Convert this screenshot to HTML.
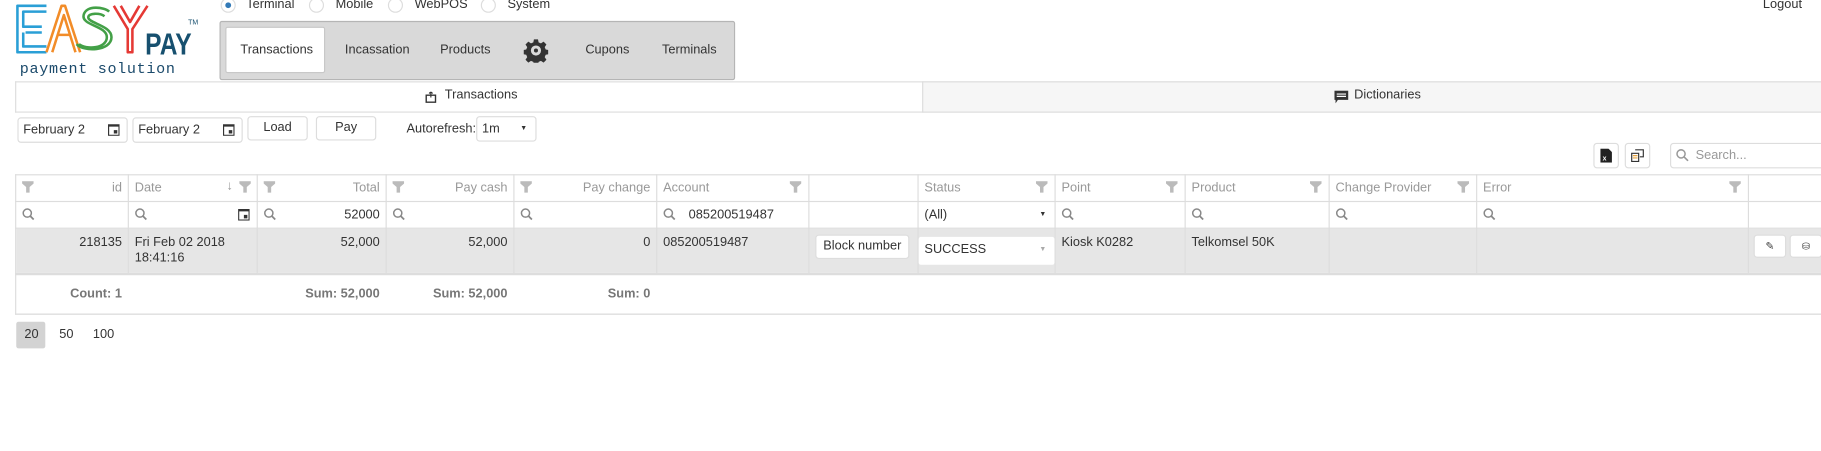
<!DOCTYPE html>
<html><head><meta charset="utf-8"><style>
*{box-sizing:border-box;margin:0;padding:0}
html,body{width:1821px;height:451px;overflow:hidden;background:#fff}
#w{position:absolute;left:0;top:0;width:1568px;height:388px;transform:scale(1.16135);transform-origin:0 0;font-family:"Liberation Sans",sans-serif;font-size:11px;color:#333}
.a{position:absolute;white-space:nowrap}
.rad{position:absolute;width:13px;height:13px;border:1px solid #ddd;border-radius:50%;top:-2px;background:#fff}
.rad.on::after{content:"";position:absolute;left:3px;top:3px;width:5px;height:5px;border-radius:50%;background:#337ab7}
.btn{position:absolute;border:1px solid #ddd;border-radius:3px;background:#fff;text-align:center;line-height:19px}
.inp{position:absolute;border:1px solid #ddd;border-radius:3px;background:#fff;height:22px;line-height:20px;padding-left:4px}
.vl{position:absolute;width:1px;background:#ddd}
.hl{position:absolute;height:1px;background:#ddd}
.h{color:#999}
.b{font-weight:bold;color:#777}
svg{display:block}
</style></head><body><div id="w">
<!-- logo -->
<svg class="a" style="left:12px;top:0" width="172" height="66" viewBox="0 0 172 66">
<g fill="none" stroke-width="2.2" stroke-linejoin="round">
<path d="M28 5H3v40h25M28 10H8v13h16M8 28v12h20M24 28H10" stroke="#2a9fd6"/>
<path d="M28 45L41 5h3l13 40M33 45L43 13l10 32M37 30h12" stroke="#f28c28"/>
<path d="M82 10c-4-4-20-6-22 3-2 9 20 9 20 19 0 10-18 11-24 6M78 14c-4-3-14-3-14 1 0 5 20 7 20 17 0 12-24 13-30 6" stroke="#43a047"/>
<path d="M86 5l12 20V45h4V25L115 5M92 5l8 14 8-14" stroke="#e53935"/>
</g>
<text x="113" y="47" font-family="Liberation Sans" font-weight="bold" font-size="26" textLength="40" lengthAdjust="spacingAndGlyphs" fill="#17506f">PAY</text>
<text x="150" y="21" font-family="Liberation Sans" font-size="6" fill="#17506f">TM</text>
<text x="5" y="63" font-family="Liberation Mono" font-size="13" letter-spacing="0.6" fill="#1b4a6b">payment solution</text>
</svg>
<!-- radios -->
<div class="rad on" style="left:190px"></div><div class="a" style="left:212px;top:-2px">Terminal</div>
<div class="rad" style="left:266px"></div><div class="a" style="left:289px;top:-2px">Mobile</div>
<div class="rad" style="left:334px"></div><div class="a" style="left:357px;top:-2px">WebPOS</div>
<div class="rad" style="left:414px"></div><div class="a" style="left:437px;top:-2px">System</div>
<div class="a" style="left:1518px;top:-2px">Logout</div>
<!-- nav -->
<div class="a" style="left:189px;top:18px;width:444px;height:51px;background:#d9d9d9;border:1px solid #b5b5b5;border-radius:2px"></div>
<div class="a" style="left:194px;top:23px;width:86px;height:40px;background:#fff;border:1px solid #c8c8c8;border-radius:2px"></div>
<div class="a" style="left:207px;top:37px">Transactions</div>
<div class="a" style="left:297px;top:37px">Incassation</div>
<div class="a" style="left:379px;top:37px">Products</div>
<svg class="a" style="left:451px;top:33px" width="21" height="21" viewBox="0 0 24 24"><path fill="#333" d="M10 1h4l.6 3 2.3 1 2.6-1.7 2.8 2.8-1.7 2.6 1 2.3 3 .6v4l-3 .6-1 2.3 1.7 2.6-2.8 2.8-2.6-1.7-2.300 1-.6 3h-4l-.6-3-2.3-1-2.6 1.7-2.8-2.8 1.7-2.6-1-2.3-3-.6v-4l3-.6 1-2.3-1.7-2.6 2.8-2.8 2.6 1.7 2.3-1zM12 7a5 5 0 100 10 5 5 0 000-10zm0 3a2 2 0 110 4 2 2 0 010-4z" fill-rule="evenodd"/></svg>
<div class="a" style="left:504px;top:37px">Cupons</div>
<div class="a" style="left:570px;top:37px">Terminals</div>
<!-- tabs -->
<div class="a" style="left:13px;top:70px;width:1555px;height:27px;border-top:1px solid #ddd;border-bottom:1px solid #ddd;border-left:1px solid #ddd"></div>
<div class="a" style="left:794px;top:70px;width:774px;height:27px;background:#f6f6f6;border-top:1px solid #ddd;border-bottom:1px solid #ddd;border-left:1px solid #ddd"></div>
<svg class="a" style="left:366px;top:79px" width="10" height="10" viewBox="0 0 10 10"><path d="M1 3h8v6H1z" fill="none" stroke="#333" stroke-width="1.2"/><path d="M5 0v5M3.5 1.5L5 0l1.5 1.5" stroke="#333" fill="none"/></svg>
<div class="a" style="left:383px;top:76px">Transactions</div>
<svg class="a" style="left:1149px;top:78px" width="12" height="11" viewBox="0 0 12 11"><path d="M0 0h12v8H3l-2 3V8H0z" fill="#333"/><path d="M2 3h8M2 5h8" stroke="#fff"/></svg>
<div class="a" style="left:1166px;top:76px">Dictionaries</div>
<!-- toolbar -->
<div class="inp" style="left:15px;top:101px;width:95px">February 2</div>
<svg class="a" style="left:93px;top:106px" width="10" height="11" viewBox="0 0 10 11"><path d="M0 1h10v10H0z" fill="#333"/><path d="M1 3h8v7H1z" fill="#fff"/><path d="M5 6h3v3H5z" fill="#333"/></svg>
<div class="inp" style="left:114px;top:101px;width:95px">February 2</div>
<svg class="a" style="left:192px;top:106px" width="10" height="11" viewBox="0 0 10 11"><path d="M0 1h10v10H0z" fill="#333"/><path d="M1 3h8v7H1z" fill="#fff"/><path d="M5 6h3v3H5z" fill="#333"/></svg>
<div class="btn" style="left:213px;top:100px;width:52px;height:21px">Load</div>
<div class="btn" style="left:272px;top:100px;width:52px;height:21px">Pay</div>
<div class="a" style="left:350px;top:105px">Autorefresh:</div>
<div class="inp" style="left:410px;top:100px;width:52px">1m</div>
<div class="a" style="left:448px;top:108px;font-size:6px">▼</div>
<!-- top-right tools -->
<div class="btn" style="left:1372px;top:123px;width:22px;height:22px"></div>
<svg class="a" style="left:1378px;top:128px" width="10" height="12" viewBox="0 0 10 12"><path d="M0 0h7l3 3v9H0z" fill="#222"/><text x="2" y="10" font-size="6" fill="#fff" font-family="Liberation Sans" font-weight="bold">x</text></svg>
<div class="btn" style="left:1399px;top:123px;width:22px;height:22px"></div>
<svg class="a" style="left:1404px;top:128px" width="12" height="12" viewBox="0 0 12 12"><path d="M4 1h7v6H8" fill="none" stroke="#333"/><path d="M1 4h6v7H1z" fill="#fff" stroke="#333"/><path d="M2 6h4M2 8h4" stroke="#e8a33c"/></svg>
<div class="inp" style="left:1438px;top:123px;width:140px;height:22px;padding-left:21px;color:#999">Search...</div>
<svg class="a" style="left:1443px;top:128px" width="11" height="11" viewBox="0 0 11 11"><circle cx="4.5" cy="4.5" r="3.5" fill="none" stroke="#999" stroke-width="1.3"/><path d="M7 7l3.5 3.5" stroke="#999" stroke-width="1.4"/></svg>
<!-- grid -->
<div class="a" style="left:13px;top:150px;width:1556px;height:121px;border:1px solid #ddd;border-right:none"></div>
<div class="a" style="left:14px;top:197px;width:1554px;height:38px;background:#e6e6e6"></div>
<div class="hl" style="left:13px;top:173px;width:1555px"></div>
<div class="hl" style="left:13px;top:196px;width:1555px"></div>
<div class="hl" style="left:13px;top:235px;width:1555px;height:2px"></div>
<div class="hl" style="left:13px;top:270px;width:1555px"></div>
<div class="vl" style="left:110px;top:150px;height:86px"></div>
<div class="vl" style="left:221px;top:150px;height:86px"></div>
<div class="vl" style="left:332px;top:150px;height:86px"></div>
<div class="vl" style="left:442px;top:150px;height:86px"></div>
<div class="vl" style="left:565px;top:150px;height:86px"></div>
<div class="vl" style="left:696px;top:150px;height:86px"></div>
<div class="vl" style="left:790px;top:150px;height:86px"></div>
<div class="vl" style="left:908px;top:150px;height:86px"></div>
<div class="vl" style="left:1020px;top:150px;height:86px"></div>
<div class="vl" style="left:1144px;top:150px;height:86px"></div>
<div class="vl" style="left:1271px;top:150px;height:86px"></div>
<div class="vl" style="left:1505px;top:150px;height:86px"></div>
<svg width="0" height="0" style="position:absolute"><defs><symbol id="f" viewBox="0 0 10 10"><path d="M0 0h10v2L6.5 5v5h-3V5L0 2z" fill="#bbb"/></symbol><symbol id="s" viewBox="0 0 11 11"><circle cx="4.5" cy="4.5" r="3.5" fill="none" stroke="#888" stroke-width="1.3"/><path d="M7 7l3 3" stroke="#888" stroke-width="1.5"/></symbol></defs></svg>
<svg class="a" style="left:19px;top:156px" width="10" height="10"><use href="#f"/></svg>
<svg class="a" style="left:206px;top:156px" width="10" height="10"><use href="#f"/></svg>
<svg class="a" style="left:227px;top:156px" width="10" height="10"><use href="#f"/></svg>
<svg class="a" style="left:338px;top:156px" width="10" height="10"><use href="#f"/></svg>
<svg class="a" style="left:448px;top:156px" width="10" height="10"><use href="#f"/></svg>
<svg class="a" style="left:680px;top:156px" width="10" height="10"><use href="#f"/></svg>
<svg class="a" style="left:892px;top:156px" width="10" height="10"><use href="#f"/></svg>
<svg class="a" style="left:1004px;top:156px" width="10" height="10"><use href="#f"/></svg>
<svg class="a" style="left:1128px;top:156px" width="10" height="10"><use href="#f"/></svg>
<svg class="a" style="left:1255px;top:156px" width="10" height="10"><use href="#f"/></svg>
<svg class="a" style="left:1489px;top:156px" width="10" height="10"><use href="#f"/></svg>
<div class="a h" style="right:1463px;top:156px">id</div>
<div class="a h" style="left:116px;top:156px">Date</div>
<div class="a h" style="left:195px;top:154px">↓</div>
<div class="a h" style="right:1241px;top:156px">Total</div>
<div class="a h" style="right:1131px;top:156px">Pay cash</div>
<div class="a h" style="right:1008px;top:156px">Pay change</div>
<div class="a h" style="left:571px;top:156px">Account</div>
<div class="a h" style="left:796px;top:156px">Status</div>
<div class="a h" style="left:914px;top:156px">Point</div>
<div class="a h" style="left:1026px;top:156px">Product</div>
<div class="a h" style="left:1150px;top:156px">Change Provider</div>
<div class="a h" style="left:1277px;top:156px">Error</div>
<svg class="a" style="left:19px;top:179px" width="11" height="11"><use href="#s"/></svg>
<svg class="a" style="left:116px;top:179px" width="11" height="11"><use href="#s"/></svg>
<svg class="a" style="left:205px;top:179px" width="10" height="11" viewBox="0 0 10 11"><path d="M0 1h10v10H0z" fill="#333"/><path d="M1 3h8v7H1z" fill="#fff"/><path d="M5 6h3v3H5z" fill="#333"/></svg>
<svg class="a" style="left:227px;top:179px" width="11" height="11"><use href="#s"/></svg>
<div class="a" style="right:1241px;top:179px">52000</div>
<svg class="a" style="left:338px;top:179px" width="11" height="11"><use href="#s"/></svg>
<svg class="a" style="left:448px;top:179px" width="11" height="11"><use href="#s"/></svg>
<svg class="a" style="left:571px;top:179px" width="11" height="11"><use href="#s"/></svg>
<div class="a" style="left:593px;top:179px">085200519487</div>
<div class="a" style="left:796px;top:179px">(All)</div>
<div class="a" style="left:895px;top:182px;font-size:6px">▼</div>
<svg class="a" style="left:914px;top:179px" width="11" height="11"><use href="#s"/></svg>
<svg class="a" style="left:1026px;top:179px" width="11" height="11"><use href="#s"/></svg>
<svg class="a" style="left:1150px;top:179px" width="11" height="11"><use href="#s"/></svg>
<svg class="a" style="left:1277px;top:179px" width="11" height="11"><use href="#s"/></svg>
<div class="a" style="right:1463px;top:203px">218135</div>
<div class="a" style="left:116px;top:203px;line-height:13px">Fri Feb 02 2018<br>18:41:16</div>
<div class="a" style="right:1241px;top:203px">52,000</div>
<div class="a" style="right:1131px;top:203px">52,000</div>
<div class="a" style="right:1008px;top:203px">0</div>
<div class="a" style="left:571px;top:203px">085200519487</div>
<div class="btn" style="left:702px;top:202px;width:81px;height:21px;line-height:19px">Block number</div>
<div class="a" style="left:791px;top:204px;width:117px;height:24px;background:#fff;border-radius:2px;padding:5px 0 0 5px">SUCCESS</div>
<div class="a" style="left:895px;top:212px;font-size:6px;color:#aaa">▼</div>
<div class="a" style="left:914px;top:203px">Kiosk K0282</div>
<div class="a" style="left:1026px;top:203px">Telkomsel 50K</div>
<div class="btn" style="left:1510px;top:202px;width:28px;height:20px;font-size:9px">✎</div>
<div class="btn" style="left:1541px;top:202px;width:28px;height:20px;font-size:8px">⛁</div>
<div class="a b" style="right:1463px;top:247px">Count: 1</div>
<div class="a b" style="right:1241px;top:247px">Sum: 52,000</div>
<div class="a b" style="right:1131px;top:247px">Sum: 52,000</div>
<div class="a b" style="right:1008px;top:247px">Sum: 0</div>
<div class="a" style="left:14px;top:277px;width:25px;height:23px;background:#d3d3d3;border-radius:2px"></div>
<div class="a" style="left:21px;top:282px">20</div>
<div class="a" style="left:51px;top:282px">50</div>
<div class="a" style="left:80px;top:282px">100</div>
</div></body></html>
